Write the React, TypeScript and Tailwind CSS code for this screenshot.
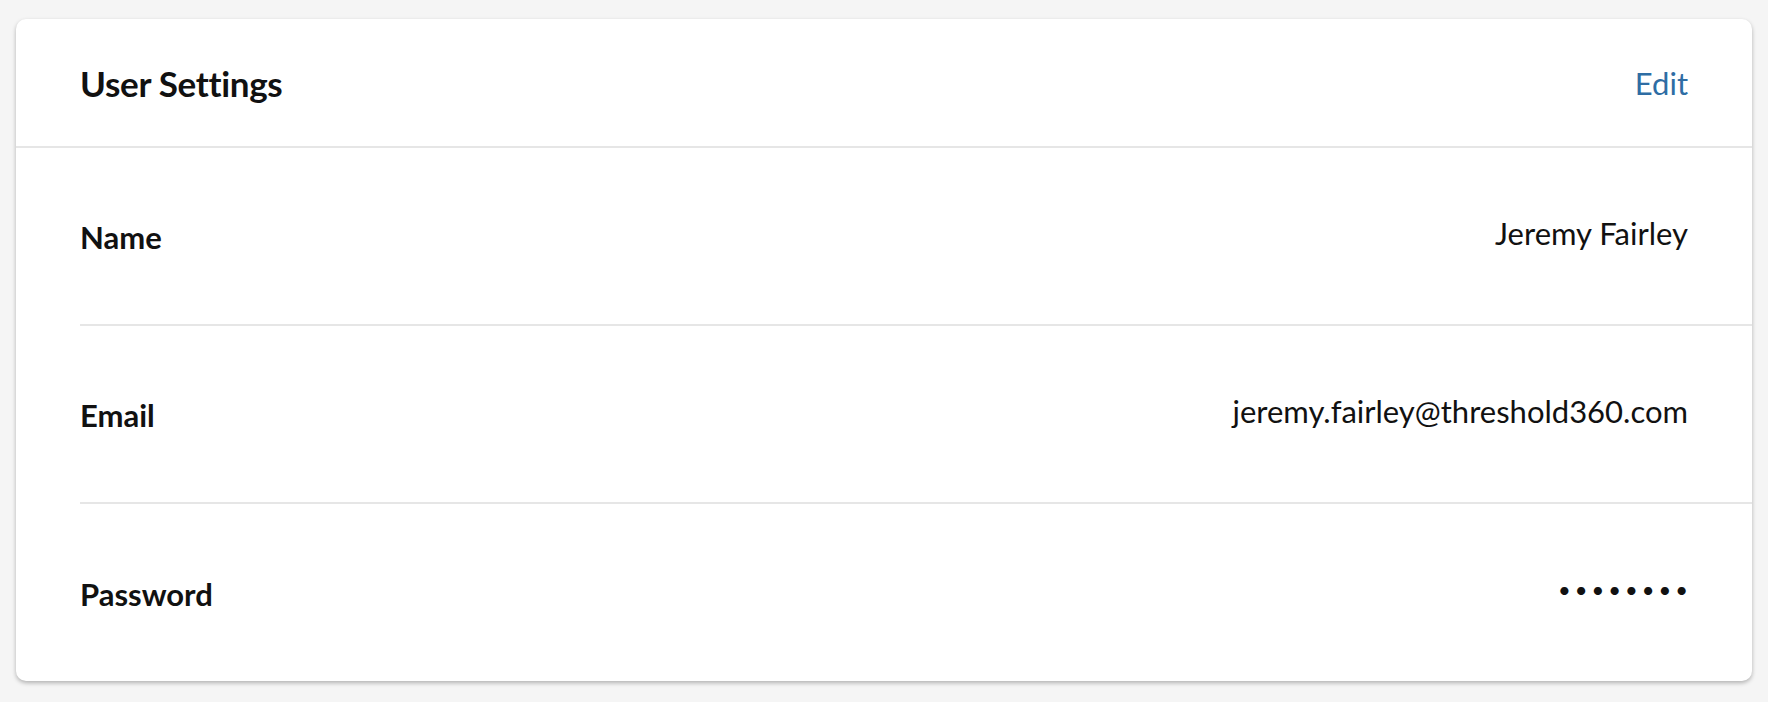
const rows = [
  { label: "Name", value: "Jeremy Fairley" },
  { label: "Email", value: "jeremy.fairley@threshold360.com" },
  { label: "Password", value: "••••••••", secret: true },
];

export default function App() {
  return (
    <div
      className="min-h-[702px] bg-[#f5f5f5] px-4 pt-[19px] pb-[22px]"
      style={{ fontFamily: "Lato, 'Open Sans', sans-serif" }}
    >
      <div className="rounded-[10px] bg-white shadow-[0_2px_4px_rgba(0,0,0,0.28)]">
        <div className="flex h-[129px] items-center justify-between border-b-2 border-[#e6e6e6] px-16">
          <h1 className="pt-[2px] text-[35px] font-bold tracking-[-0.3px] text-[#111]">User Settings</h1>
          <button className="pt-[2px] text-[31px] text-[#2e6da4]">Edit</button>
        </div>

        <div className="pl-16">
          {rows.map((row, i) => (
            <div
              key={row.label}
              className={
                i < rows.length - 1
                  ? "flex h-[178px] items-center justify-between border-b-2 border-[#e6e6e6] pr-16"
                  : "flex h-[177px] items-center justify-between pr-16"
              }
            >
              <span className="pt-[3px] text-[31px] font-bold text-[#111]">{row.label}</span>
              {row.secret ? (
                <span className="mr-[-4px] pb-[6px] text-[22px] tracking-[4px] text-[#111]">{row.value}</span>
              ) : (
                <span className="pb-[6px] text-[31px] text-[#111]">{row.value}</span>
              )}
            </div>
          ))}
        </div>
      </div>
    </div>
  );
}
